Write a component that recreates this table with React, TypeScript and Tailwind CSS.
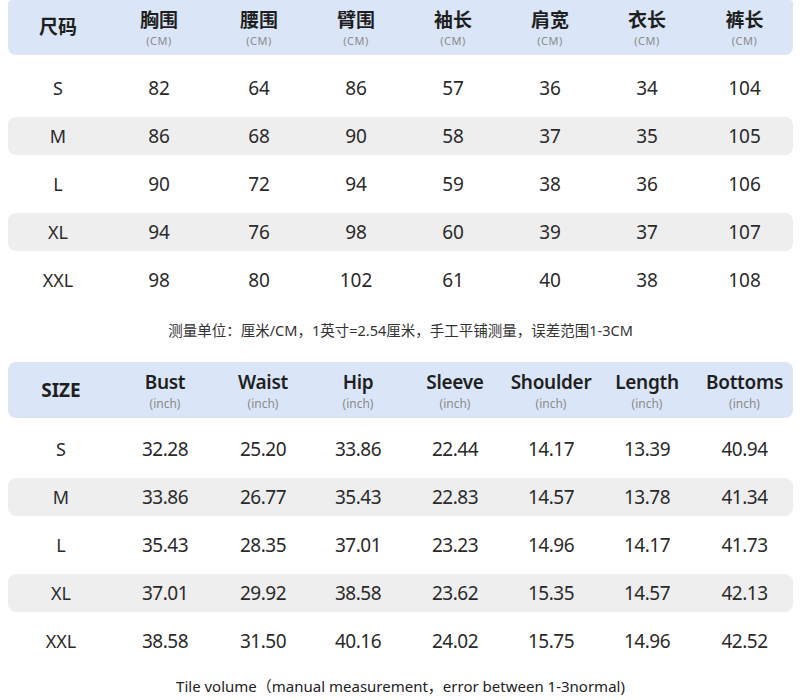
import React from "react";

const cnCols = "grid-cols-[100px_102px_98px_96px_98px_96px_98px_97px]";
const enCols = "grid-cols-[106px_102px_94px_96px_98px_94px_98px_97px]";

const cnHeaders = ["胸围", "腰围", "臂围", "袖长", "肩宽", "衣长", "裤长"];
const enHeaders = ["Bust", "Waist", "Hip", "Sleeve", "Shoulder", "Length", "Bottoms"];

const cnRows: string[][] = [
  ["S", "82", "64", "86", "57", "36", "34", "104"],
  ["M", "86", "68", "90", "58", "37", "35", "105"],
  ["L", "90", "72", "94", "59", "38", "36", "106"],
  ["XL", "94", "76", "98", "60", "39", "37", "107"],
  ["XXL", "98", "80", "102", "61", "40", "38", "108"],
];

const enRows: string[][] = [
  ["S", "32.28", "25.20", "33.86", "22.44", "14.17", "13.39", "40.94"],
  ["M", "33.86", "26.77", "35.43", "22.83", "14.57", "13.78", "41.34"],
  ["L", "35.43", "28.35", "37.01", "23.23", "14.96", "14.17", "41.73"],
  ["XL", "37.01", "29.92", "38.58", "23.62", "15.35", "14.57", "42.13"],
  ["XXL", "38.58", "31.50", "40.16", "24.02", "15.75", "14.96", "42.52"],
];

const font = { fontFamily: '"Noto Sans", "Noto Sans CJK SC", sans-serif' };

function Rows({ rows, cols, condensed }: { rows: string[][]; cols: string; condensed?: boolean }) {
  return (
    <div className="flex flex-col gap-[10px]">
      {rows.map((r, i) => (
        <div
          key={i}
          className={`grid ${cols} h-[38px] items-center rounded-[8px] ${i % 2 === 1 ? "bg-[#eeeeee]" : ""}`}
        >
          {r.map((c, j) => (
            <div
              key={j}
              className={`text-center text-[#2a2a2a] ${j === 0 ? "text-[18px]" : condensed ? "text-[19px] tracking-[-0.5px]" : "text-[19px]"}`}
            >
              {c}
            </div>
          ))}
        </div>
      ))}
    </div>
  );
}

export default function App() {
  return (
    <div className="w-[800px] h-[700px] bg-white overflow-hidden" style={font}>
      <div className="pl-[8px] pr-[7px]">
        {/* Top CN table */}
        <div className={`grid ${cnCols} h-[55px] items-center rounded-b-[8px] rounded-t-[4px] bg-[#dae6f7]`}>
          <div className="text-center text-[19px] font-bold text-[#1f1f1f]">尺码</div>
          {cnHeaders.map((h) => (
            <div key={h} className="flex flex-col items-center leading-none">
              <div className="text-[19px] font-bold text-[#1f1f1f] leading-[22px]">{h}</div>
              <div className="mt-[4px] text-[11px] text-[#8a8a8a] tracking-[0.5px]">(CM)</div>
            </div>
          ))}
        </div>
        <div className="mt-[14px]">
          <Rows rows={cnRows} cols={cnCols} />
        </div>

        <div className="h-[63px] flex items-center justify-center">
          <div className="text-[14.5px] text-[#333]">
            测量单位：厘米/CM，1英寸=2.54厘米，手工平铺测量，误差范围1-3CM
          </div>
        </div>

        {/* Bottom EN table */}
        <div className={`grid ${enCols} h-[56px] items-center rounded-[8px] bg-[#dae6f7]`}>
          <div className="text-center text-[19px] font-bold text-[#1f1f1f]">SIZE</div>
          {enHeaders.map((h) => (
            <div key={h} className="flex flex-col items-center leading-none">
              <div className="text-[19px] font-semibold text-[#1f1f1f] leading-[22px] tracking-[-0.3px]">{h}</div>
              <div className="mt-[5px] text-[12px] text-[#8a8a8a]">(inch)</div>
            </div>
          ))}
        </div>
        <div className="mt-[12px]">
          <Rows rows={enRows} cols={enCols} condensed />
        </div>

        <div className="h-[52px] flex items-center justify-center">
          <div className="text-[15px] text-[#222]">
            Tile volume（manual measurement，error between 1-3normal)
          </div>
        </div>
      </div>
    </div>
  );
}
